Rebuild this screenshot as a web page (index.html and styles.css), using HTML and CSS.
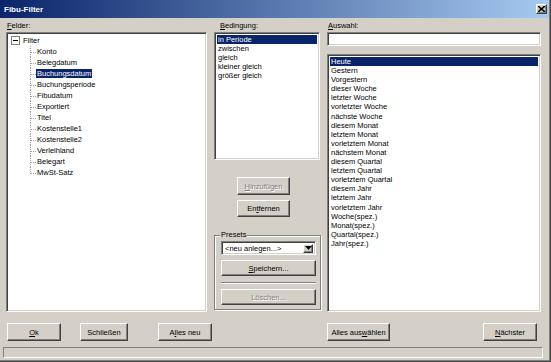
FILE: index.html
```html
<!DOCTYPE html>
<html lang="de">
<head>
    <meta charset="UTF-8">
    <title>Fibu-Filter</title>
    <link rel="stylesheet" href="styles.css">
</head>
<body>
<div class="dialog">
    <div class="titlebar">
        <span class="title">Fibu-Filter</span>
        <button class="close-btn">
            <svg width="7" height="6" viewBox="0 0 7 6"><path d="M0 0 L7 6 M7 0 L0 6" stroke="#000" stroke-width="1.6"/></svg>
        </button>
    </div>

    <div class="columns">
        <div class="col">
            <div class="caption"><u>F</u>elder:</div>
            <div class="sunken tree">
                <div class="root"><span class="expander"></span>Filter</div>
                <ul class="branch">
                    <li>Konto</li>
                    <li>Belegdatum</li>
                    <li><span class="selected">Buchungsdatum</span></li>
                    <li>Buchungsperiode</li>
                    <li>Fibudatum</li>
                    <li>Exportiert</li>
                    <li>Titel</li>
                    <li>Kostenstelle1</li>
                    <li>Kostenstelle2</li>
                    <li>Verleihland</li>
                    <li>Belegart</li>
                    <li>MwSt-Satz</li>
                </ul>
            </div>
        </div>

        <div class="col">
            <div class="caption cond-caption"><u>B</u>edingung:</div>
            <ul class="sunken listbox cond-list">
                <li class="active">in Periode</li>
                <li>zwischen</li>
                <li>gleich</li>
                <li>kleiner gleich</li>
                <li>größer gleich</li>
            </ul>
            <button class="btn mid-btn add-btn" disabled><u>H</u>inzufügen</button>
            <button class="btn mid-btn remove-btn">En<u>t</u>fernen</button>
            <fieldset class="presets">
                <legend>Presets</legend>
                <div class="combo">
                    <span class="combo-text">&lt;neu anlegen...&gt;</span>
                    <span class="combo-arrow">
                        <svg width="7" height="4" viewBox="0 0 7 4"><path d="M0 0 H7 L3.5 4 Z" fill="#000"/></svg>
                    </span>
                </div>
                <button class="btn full-btn save-btn"><u>S</u>peichern...</button>
                <div class="separator"></div>
                <button class="btn full-btn" disabled>Löschen...</button>
            </fieldset>
        </div>

        <div class="col">
            <div class="caption"><u>A</u>uswahl:</div>
            <input class="sunken field" type="text">
            <ul class="sunken listbox select-list">
                <li class="active">Heute</li>
                <li>Gestern</li>
                <li>Vorgestern</li>
                <li>dieser Woche</li>
                <li>letzter Woche</li>
                <li>vorletzter Woche</li>
                <li>nächste Woche</li>
                <li>diesem Monat</li>
                <li>letztem Monat</li>
                <li>vorletztem Monat</li>
                <li>nächstem Monat</li>
                <li>diesem Quartal</li>
                <li>letztem Quartal</li>
                <li>vorletztem Quartal</li>
                <li>diesem Jahr</li>
                <li>letztem Jahr</li>
                <li>vorletztem Jahr</li>
                <li>Woche(spez.)</li>
                <li>Monat(spez.)</li>
                <li>Quartal(spez.)</li>
                <li>Jahr(spez.)</li>
            </ul>
        </div>
    </div>

    <div class="actions">
        <button class="btn ok-btn"><u>O</u>k</button>
        <button class="btn close-dlg-btn">Schließen</button>
        <button class="btn new-btn">A<u>l</u>les neu</button>
        <button class="btn all-btn">Alles aus<u>w</u>ählen</button>
        <button class="btn next-btn"><u>N</u>ächster</button>
    </div>

    <div class="statusbar"></div>
</div>
</body>
</html>
```

FILE: styles.css
```css
* {
    box-sizing: border-box;
}

body {
    margin: 0;
    font-family: "Liberation Sans", Arial, sans-serif;
    font-size: 7.5px;
    color: #000;
    background: #d4d0c8;
}

.dialog {
    width: 551px;
    height: 362px;
    display: flex;
    flex-direction: column;
    background: #d4d0c8;
    border-right: 1px solid #404040;
    border-bottom: 1px solid #404040;
    box-shadow: inset -1px -1px #808080;
}

/* title bar */
.titlebar {
    height: 18px;
    margin-right: 1px;
    display: flex;
    align-items: center;
    justify-content: space-between;
    padding-left: 4px;
    background: linear-gradient(to right, #0a246a, #a6caf0);
}

.title {
    color: #fff;
    font-weight: bold;
    font-size: 8px;
}

.close-btn {
    width: 11px;
    height: 10px;
    margin-right: 2px;
    padding: 0;
    display: flex;
    align-items: center;
    justify-content: center;
    background: #d4d0c8;
    border: 1px solid;
    border-color: #fff #404040 #404040 #fff;
    box-shadow: inset -1px -1px #808080;
}

/* shared 3d bits */
.sunken {
    background: #fff;
    border: 1px solid;
    border-color: #808080 #fff #fff #808080;
    box-shadow: inset 1px 1px #404040, inset -1px -1px #d4d0c8;
}

.btn {
    display: block;
    padding: 0;
    font-family: inherit;
    font-size: 7.5px;
    color: #000;
    background: #d4d0c8;
    border: 1px solid;
    border-color: #fff #404040 #404040 #fff;
    box-shadow: inset -1px -1px #808080;
}

.btn:disabled {
    color: #808080;
    text-shadow: 1px 1px #fff;
}

/* three columns */
.columns {
    height: 294px;
    display: grid;
    grid-template-columns: 201px 106px 214px;
    column-gap: 7px;
    padding-left: 6px;
}

.col {
    display: flex;
    flex-direction: column;
    min-height: 0;
}

.caption {
    height: 14px;
    line-height: 15px;
    padding-left: 1px;
}

.cond-caption {
    padding-left: 6px;
}

/* tree */
.tree {
    flex: 1;
    padding: 2px 0 0 2px;
    line-height: 11px;
}

.root {
    display: flex;
    align-items: center;
}

.expander {
    position: relative;
    width: 9px;
    height: 9px;
    margin: 0 3px 0 2px;
    background: #fff;
    border: 1px solid #808080;
}

.expander::after {
    content: "";
    position: absolute;
    left: 1px;
    top: 3px;
    width: 5px;
    height: 1px;
    background: #000;
}

.branch {
    list-style: none;
    margin: 0;
    padding: 0 0 0 21px;
}

.branch li {
    position: relative;
    padding-left: 7px;
    height: 11px;
}

.branch li::before {
    content: "";
    position: absolute;
    left: 0;
    top: 0;
    width: 5px;
    height: 6px;
    border-left: 1px dotted #a0a0a0;
    border-bottom: 1px dotted #a0a0a0;
}

.branch li:not(:last-child)::after {
    content: "";
    position: absolute;
    left: 0;
    top: 6px;
    bottom: 0;
    border-left: 1px dotted #a0a0a0;
}

.selected {
    margin-left: -1px;
    padding: 0 1px;
    color: #fff;
    background: #0a246a;
}

/* list boxes */
.listbox {
    list-style: none;
    margin: 0;
    padding: 2px;
}

.listbox li {
    padding-left: 1px;
    white-space: nowrap;
}

.listbox li.active {
    color: #fff;
    background: #0a246a;
}

.cond-list {
    height: 128px;
    line-height: 9.1px;
}

.select-list {
    flex: 1;
    margin-top: 8px;
    line-height: 9.1px;
}

.field {
    height: 14px;
    outline: none;
}

/* middle column buttons */
.mid-btn {
    width: 53px;
    margin-left: 23px;
}

.add-btn {
    height: 18px;
    margin-top: 17px;
}

.remove-btn {
    height: 17px;
    margin-top: 5px;
}

.presets {
    margin: 14px 0 0 0;
    height: 79px;
    padding: 2px 4px 0 6px;
    border: 1px solid #808080;
    box-shadow: inset 1px 1px #fff, 1px 1px #fff;
}

.presets legend {
    padding: 0 1px;
    margin-left: -1px;
    line-height: 8px;
    background: #d4d0c8;
}

.combo {
    height: 14px;
    display: flex;
    align-items: center;
    background: #fff;
    border: 1px solid;
    border-color: #808080 #fff #fff #808080;
    box-shadow: inset 1px 1px #404040, inset -1px -1px #d4d0c8;
    padding: 2px;
}

.combo-text {
    flex: 1;
    padding-left: 1px;
}

.combo-arrow {
    width: 10px;
    height: 9px;
    display: flex;
    align-items: center;
    justify-content: center;
    background: #d4d0c8;
    border: 1px solid;
    border-color: #fff #404040 #404040 #fff;
    box-shadow: inset -1px -1px #808080;
}

.full-btn {
    width: 95px;
    height: 16px;
}

.save-btn {
    margin-top: 5px;
}

.separator {
    height: 2px;
    margin: 6px 0 5px;
    border-top: 1px solid #808080;
    border-bottom: 1px solid #fff;
}

/* bottom row */
.actions {
    display: flex;
    height: 18px;
    margin-top: 11px;
}

.actions .btn {
    height: 18px;
    width: 54px;
}

.ok-btn {
    margin-left: 7px;
}

.close-dlg-btn {
    margin-left: 19px;
    width: 48px !important;
}

.new-btn {
    margin-left: 30px;
}

.all-btn {
    margin-left: 115px;
    width: 63px !important;
}

.next-btn {
    margin-left: 93px;
}

.statusbar {
    width: 540px;
    height: 11px;
    margin: 6px 0 0 3px;
    border: 1px solid;
    border-color: #808080 #fff #fff #808080;
}
```
